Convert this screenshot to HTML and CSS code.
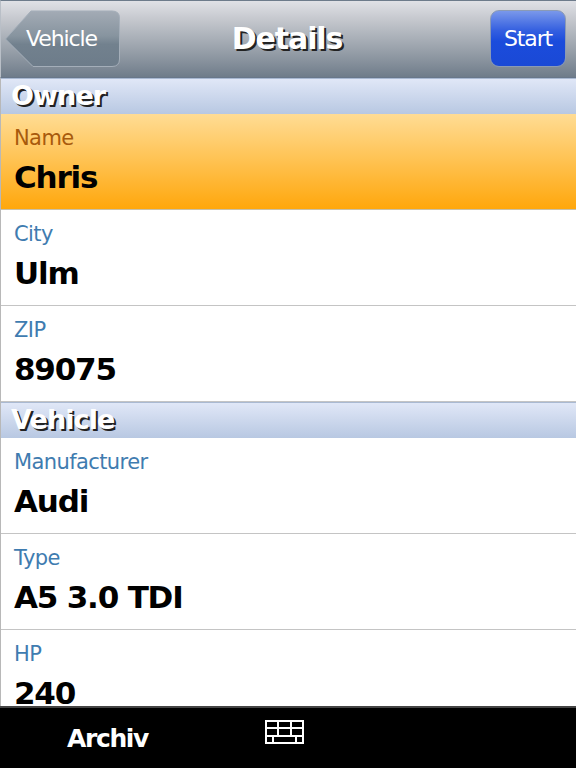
FILE: index.html
```html
<!DOCTYPE html>
<html>

<head>
  <meta charset='utf-8'>
  <title>Details</title>
  <link rel="stylesheet" href="styles.css">
</head>

<body>
  <div class="screen">
    <header class="navbar">
      <a class="back-btn">
        <svg class="back-shape" width="116" height="58" viewBox="0 0 116 58">
          <defs>
            <linearGradient id="back-fill" x1="0" y1="0" x2="0" y2="1">
              <stop offset="0" stop-color="#a3abb5" />
              <stop offset="0.45" stop-color="#87949f" />
              <stop offset="0.6" stop-color="#72818e" />
              <stop offset="1" stop-color="#6d7c8a" />
            </linearGradient>
          </defs>
          <path d="M0.5 29 L26 1 H107 Q114.5 1 114.5 8 V49 Q114.5 56.500 107 56.500 H28 Z" fill="url(#back-fill)"
            stroke="#a4aeb9" />
        </svg>
        <span class="back-label">Vehicle</span>
      </a>
      <h1 class="nav-title">Details</h1>
      <a class="start-btn">Start</a>
    </header>

    <main class="list">
      <h2 class="section">Owner</h2>
      <div class="row selected">
        <label>Name</label>
        <div class="value">Chris</div>
      </div>
      <div class="row">
        <label>City</label>
        <div class="value">Ulm</div>
      </div>
      <div class="row">
        <label>ZIP</label>
        <div class="value">89075</div>
      </div>
      <h2 class="section">Vehicle</h2>
      <div class="row">
        <label>Manufacturer</label>
        <div class="value">Audi</div>
      </div>
      <div class="row">
        <label>Type</label>
        <div class="value">A5 3.0 TDI</div>
      </div>
      <div class="row">
        <label>HP</label>
        <div class="value">240</div>
      </div>
    </main>

    <footer class="tabbar">
      <div class="tab tab-archiv">Archiv</div>
      <div class="tab tab-icon">
        <svg width="39" height="24" viewBox="0 0 39 24" fill="none" stroke="#fff" stroke-width="2">
          <rect x="1" y="1" width="37" height="22" />
          <path d="M1 8 H38 M1 16 H38 M13 1 V16 M26 1 V16 M8 16 V23 M31 16 V23" />
        </svg>
      </div>
    </footer>
  </div>
</body>

</html>
```

FILE: styles.css
```css
* {
  box-sizing: border-box;
  margin: 0;
  padding: 0;
  font-family: "DejaVu Sans", Verdana, sans-serif;
}

body {
  background-color: #000;
}

.screen {
  display: flex;
  flex-direction: column;
  width: 576px;
  height: 768px;
  overflow: hidden;
  background-color: #fff;
}

.navbar {
  flex: none;
  position: relative;
  display: flex;
  align-items: center;
  justify-content: space-between;
  height: 78px;
  padding: 0 10px 1px 5px;
  border-top: 1px solid #6d7b8b;
  border-left: 1px solid #b9bfc7;
  border-bottom: 1px solid #68778a;
  background: linear-gradient(#e0e1e6, #c4c7cd 25%, #929ba5 70%, #6f7c8a);
}

.back-btn {
  position: relative;
  display: flex;
  align-items: center;
  width: 115px;
  height: 58px;
  margin-left: -1px;
  padding-left: 21px;
  color: #fff;
  font-size: 22px;
  letter-spacing: -1.1px;
}

.back-shape {
  position: absolute;
  top: 0;
  left: 0;
}

.back-label {
  position: relative;
}

.nav-title {
  position: absolute;
  left: -3px;
  right: 0;
  text-align: center;
  color: #fff;
  font-size: 30px;
  font-weight: bold;
  letter-spacing: -1.1px;
  text-shadow: 2px 2px 0 #222;
  pointer-events: none;
}

.start-btn {
  display: flex;
  align-items: center;
  justify-content: center;
  width: 76px;
  height: 57px;
  border: 1px solid #8a9ab5;
  border-radius: 9px;
  color: #fff;
  font-size: 22px;
  letter-spacing: -1.1px;
  background: linear-gradient(#7a98ea, #3560e0 35%, #1b4cdc 55%, #1a49d6);
}

.list {
  flex: 1;
  min-height: 0;
  overflow: hidden;
  border-left: 1px solid #b8b8b8;
}

.section {
  height: 36px;
  padding-left: 10px;
  line-height: 34px;
  color: #fff;
  font-size: 27px;
  font-weight: bold;
  letter-spacing: -0.9px;
  text-shadow: 2px 2px 0 #222;
  border-top: 1px solid #a9b9d2;
  background: linear-gradient(#e0e7f7, #b8c8e2);
}

.row {
  height: 96px;
  padding: 11px 0 0 13px;
  border-bottom: 1px solid #c4c4c4;
}

.row label {
  display: block;
  height: 26px;
  line-height: 26px;
  color: #3f7cb0;
  font-size: 21px;
  letter-spacing: -0.6px;
}

.value {
  margin-top: 6px;
  line-height: 40px;
  color: #000;
  font-size: 31px;
  font-weight: bold;
  letter-spacing: -1.2px;
}

.row.selected {
  border-bottom-color: #c9c0a8;
  background: linear-gradient(#ffdc94, #ffa70c);
}

.row.selected label {
  color: #a85a0c;
}

.tabbar {
  flex: none;
  display: flex;
  height: 62px;
  border-top: 2px solid #444;
  background-color: #000;
  color: #fff;
}

.tab {
  display: flex;
  justify-content: center;
}

.tab-archiv {
  width: 215px;
  align-items: center;
  font-size: 25px;
  font-weight: bold;
  letter-spacing: -1.4px;
}

.tab-icon {
  width: 139px;
  padding-top: 12px;
}
```
